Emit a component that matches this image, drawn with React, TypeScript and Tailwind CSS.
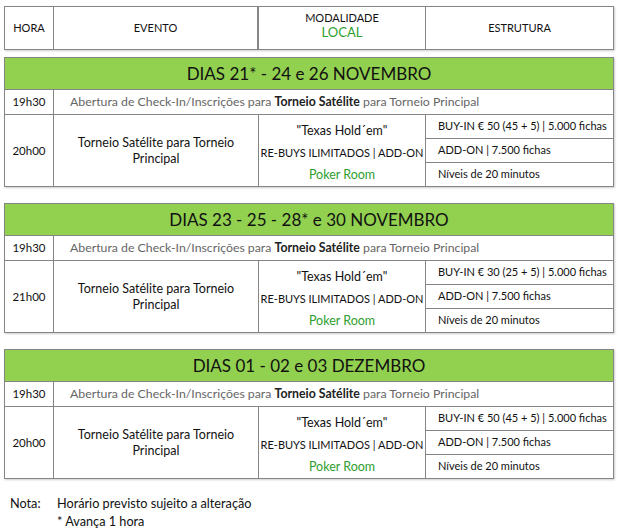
const sections = [
  {
    title: "DIAS 21* - 24 e 26 NOVEMBRO",
    hour: "20h00",
    buyIn: "BUY-IN € 50 (45 + 5) | 5.000 fichas",
  },
  {
    title: "DIAS 23 - 25 - 28* e 30 NOVEMBRO",
    hour: "21h00",
    buyIn: "BUY-IN € 30 (25 + 5) | 5.000 fichas",
  },
  {
    title: "DIAS 01 - 02 e 03 DEZEMBRO",
    hour: "20h00",
    buyIn: "BUY-IN € 50 (45 + 5) | 5.000 fichas",
  },
];

const font = { fontFamily: "Lato, 'Noto Sans', sans-serif" };

function Section({ title, hour, buyIn }: { title: string; hour: string; buyIn: string }) {
  return (
    <div className="ml-[4px] w-[610px] border border-[#858585] bg-white shadow-[1px_1px_2px_rgba(0,0,0,0.2)]">
      <div className="flex h-[32px] items-center justify-center border-b border-[#858585] bg-[#92d050] text-[17px] text-[#111]">
        {title}
      </div>
      <div className="flex h-[25px] border-b border-[#858585] text-[12.3px]">
        <div className="flex w-[49px] shrink-0 items-center justify-center border-r border-[#858585] text-[11.5px] text-[#111]">
          19h30
        </div>
        <div className="flex items-center whitespace-pre pl-[16px] text-[#666]">
          Abertura de Check-In/Inscrições para <span className="font-bold text-[#222]">Torneio Satélite</span> para Torneio Principal
        </div>
      </div>
      <div className="flex h-[71px] text-[11.5px] text-[#111]">
        <div className="flex w-[49px] shrink-0 items-center justify-center border-r border-[#858585]">
          {hour}
        </div>
        <div className="flex w-[205px] shrink-0 flex-col items-center justify-center border-r border-[#858585] text-center text-[12.5px] leading-[16px]">
          <span>Torneio Satélite para Torneio</span>
          <span>Principal</span>
        </div>
        <div className="flex w-[167px] shrink-0 flex-col items-center border-r border-[#858585] pt-[5px] text-[11px]">
          <span className="flex h-[22px] items-center text-[12.5px]">"Texas Hold´em"</span>
          <span className="flex h-[22px] items-center">RE-BUYS ILIMITADOS | ADD-ON</span>
          <span className="flex h-[22px] items-center text-[12.5px] text-[#2e9e2e]">Poker Room</span>
        </div>
        <div className="flex flex-1 flex-col text-[11px]">
          <div className="flex flex-1 items-center border-b border-[#858585] pl-[12px]">{buyIn}</div>
          <div className="flex flex-1 items-center border-b border-[#858585] pl-[12px]">ADD-ON | 7.500 fichas</div>
          <div className="flex flex-1 items-center pl-[12px]">Níveis de 20 minutos</div>
        </div>
      </div>
    </div>
  );
}

export default function App() {
  return (
    <div className="h-[531px] w-[621px] overflow-hidden bg-white pt-[6px]" style={font}>
      <div className="ml-[4px] flex h-[44px] w-[610px] border border-[#858585] text-[11px] text-[#111] shadow-[1px_1px_2px_rgba(0,0,0,0.2)]">
        <div className="flex w-[49px] shrink-0 items-center justify-center border-r border-[#858585]">HORA</div>
        <div className="flex w-[205px] shrink-0 items-center justify-center border-r-2 border-[#858585]">EVENTO</div>
        <div className="flex w-[167px] shrink-0 flex-col items-center border-r border-[#858585] pt-[3px] leading-[15px]">
          <span>MODALIDADE</span>
          <span className="text-[13px] text-[#2e9e2e]">LOCAL</span>
        </div>
        <div className="flex flex-1 items-center justify-center">ESTRUTURA</div>
      </div>
      <div className="mt-[7px] flex flex-col gap-[16px]">
        {sections.map((s) => (
          <Section key={s.title} {...s} />
        ))}
      </div>
      <div className="mt-[15px] pl-[10px] text-[12.7px] leading-[18px] text-[#111]">
        <div className="flex">
          <span className="w-[47px]">Nota:</span>
          <span>Horário previsto sujeito a alteração</span>
        </div>
        <div className="pl-[47px]">* Avança 1 hora</div>
      </div>
    </div>
  );
}
